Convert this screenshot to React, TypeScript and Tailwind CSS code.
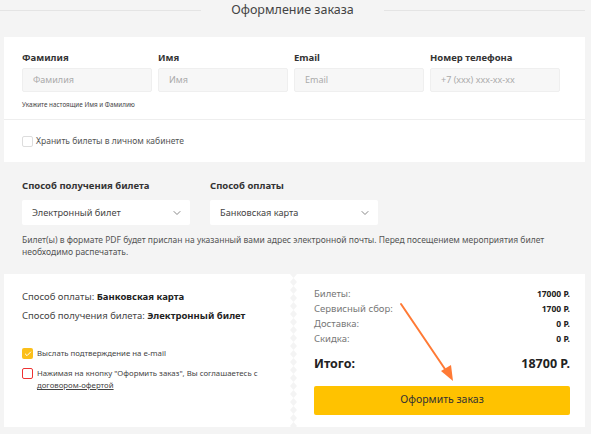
import { ChevronDown, Check } from "lucide-react"

const font = "font-['Noto_Sans','Open_Sans',sans-serif]"

// поле ввода с подписью
function Field({ label, placeholder }: { label: string; placeholder: string }) {
  return (
    <div className="w-[130px]">
      <div className="text-[9.5px] font-bold text-[#333] leading-[13px]">{label}</div>
      <div className="mt-[4px] h-[24px] bg-[#f7f7f7] border border-[#efefef] rounded-[2px] flex items-center px-[10px] text-[9px] text-[#aaa]">
        {placeholder}
      </div>
    </div>
  )
}

// выпадающий список
function Select({ label, value }: { label: string; value: string }) {
  return (
    <div className="w-[168px]">
      <div className="text-[9.5px] font-bold text-[#333] leading-[13px]">{label}</div>
      <div className="mt-[8px] h-[25px] bg-white rounded-[2px] flex items-center justify-between pl-[10px] pr-[7px] text-[9.2px] text-[#444]">
        <span>{value}</span>
        <ChevronDown size={12} strokeWidth={2} className="text-[#888]" />
      </div>
    </div>
  )
}

// строка итогов
function SumRow({ label, value }: { label: string; value: string }) {
  return (
    <div className="flex justify-between items-center h-[15px]">
      <span className="text-[9.5px] text-[#777]">{label}</span>
      <span className="text-[8.5px] font-bold text-[#222]">{value}</span>
    </div>
  )
}

// зубчатый край между панелями
function Zigzag() {
  return (
    <svg width="7" height="100%" className="block shrink-0">
      <defs>
        <pattern id="zz" width="7" height="8" patternUnits="userSpaceOnUse">
          <polygon points="0,0 3.5,4 0,8" fill="#ffffff" />
          <polygon points="7,0 3.5,4 7,8" fill="#ffffff" />
        </pattern>
      </defs>
      <rect width="7" height="100%" fill="url(#zz)" />
    </svg>
  )
}

export default function App() {
  return (
    <div className={`min-h-screen w-[591px] bg-[#f4f4f4] ${font}`}>
      {/* заголовок */}
      <div className="h-[20px] flex items-center gap-[30px] pr-[6px]">
        <div className="flex-1 h-px bg-[#e4e4e4]" />
        <div className="text-[12.5px] text-[#444] leading-none">Оформление заказа</div>
        <div className="flex-1 h-px bg-[#e4e4e4]" />
      </div>

      <div className="mx-[4px] mt-[17px] w-[581px]">
        {/* контактные данные */}
        <div className="bg-white px-[18px] pt-[14px] h-[82px]">
          <div className="flex gap-[6px]">
            <Field label="Фамилия" placeholder="Фамилия" />
            <Field label="Имя" placeholder="Имя" />
            <Field label="Email" placeholder="Email" />
            <Field label="Номер телефона" placeholder="+7 (xxx) xxx-xx-xx" />
          </div>
          <div className="mt-[8px] text-[6.3px] text-[#444]">Укажите настоящие Имя и Фамилию</div>
        </div>

        <div className="bg-white border-t border-[#eeeeee] h-[43px] px-[18px] flex items-center gap-[3px]">
          <div className="w-[11px] h-[11px] border border-[#ddd] rounded-[2px] bg-white" />
          <span className="text-[8.5px] text-[#555]">Хранить билеты в личном кабинете</span>
        </div>

        {/* способ получения и оплаты */}
        <div className="px-[18px] pt-[17px] h-[112px]">
          <div className="flex gap-[20px]">
            <Select label="Способ получения билета" value="Электронный билет" />
            <Select label="Способ оплаты" value="Банковская карта" />
          </div>
          <p className="mt-[9px] text-[8.5px] leading-[12px] text-[#555]">
            Билет(ы) в формате PDF будет прислан на указанный вами адрес электронной почты. Перед посещением мероприятия билет необходимо распечатать.
          </p>
        </div>

        {/* итоги */}
        <div className="flex h-[153px]">
          <div className="flex-1 bg-white pl-[18px] pt-[16px]">
            <div className="text-[9.5px] text-[#444] leading-[14px]">
              Способ оплаты: <b className="text-[#222]">Банковская карта</b>
            </div>
            <div className="mt-[5px] text-[9.5px] text-[#444] leading-[14px]">
              Способ получения билета: <b className="text-[#222]">Электронный билет</b>
            </div>
            <div className="mt-[25px] flex items-center gap-[4px]">
              <div className="w-[11px] h-[11px] rounded-[2px] bg-[#fbbf1a] flex items-center justify-center">
                <Check size={8} strokeWidth={3} className="text-white" />
              </div>
              <span className="text-[7.8px] text-[#444]">Выслать подтверждение на e-mail</span>
            </div>
            <div className="mt-[7px] flex items-start gap-[4px]">
              <div className="w-[11px] h-[11px] mt-[1px] shrink-0 rounded-[2px] border border-[#e33] bg-white" />
              <span className="text-[7.8px] leading-[12px] text-[#444]">
                Нажимая на кнопку "Оформить заказ", Вы соглашаетесь с<br />
                <span className="underline">договором-офертой</span>
              </span>
            </div>
          </div>
          <Zigzag />
          <div className="relative w-[288px] bg-white px-[15px] pl-[17px] pt-[13px]">
            <SumRow label="Билеты:" value="17000 Р." />
            <SumRow label="Сервисный сбор:" value="1700 Р." />
            <SumRow label="Доставка:" value="0 Р." />
            <SumRow label="Скидка:" value="0 Р." />
            <div className="mt-[8px] flex justify-between items-center">
              <span className="text-[12.5px] font-bold text-[#222]">Итого:</span>
              <span className="text-[12.5px] font-bold text-[#222]">18700 Р.</span>
            </div>
            <div className="mt-[12px] h-[29px] bg-[#ffc200] rounded-[2px] flex items-center justify-center text-[10.5px] text-[#333]">
              Оформить заказ
            </div>
            {/* стрелка-указатель */}
            <svg className="absolute left-[100px] top-[27px]" width="60" height="82" viewBox="0 0 60 82">
              <line x1="4" y1="3" x2="52" y2="74" stroke="#ff7a35" strokeWidth="2" strokeLinecap="round" />
              <polygon points="56,80 44,70 54,64" fill="#ff7a35" />
            </svg>
          </div>
        </div>
      </div>
    </div>
  )
}
